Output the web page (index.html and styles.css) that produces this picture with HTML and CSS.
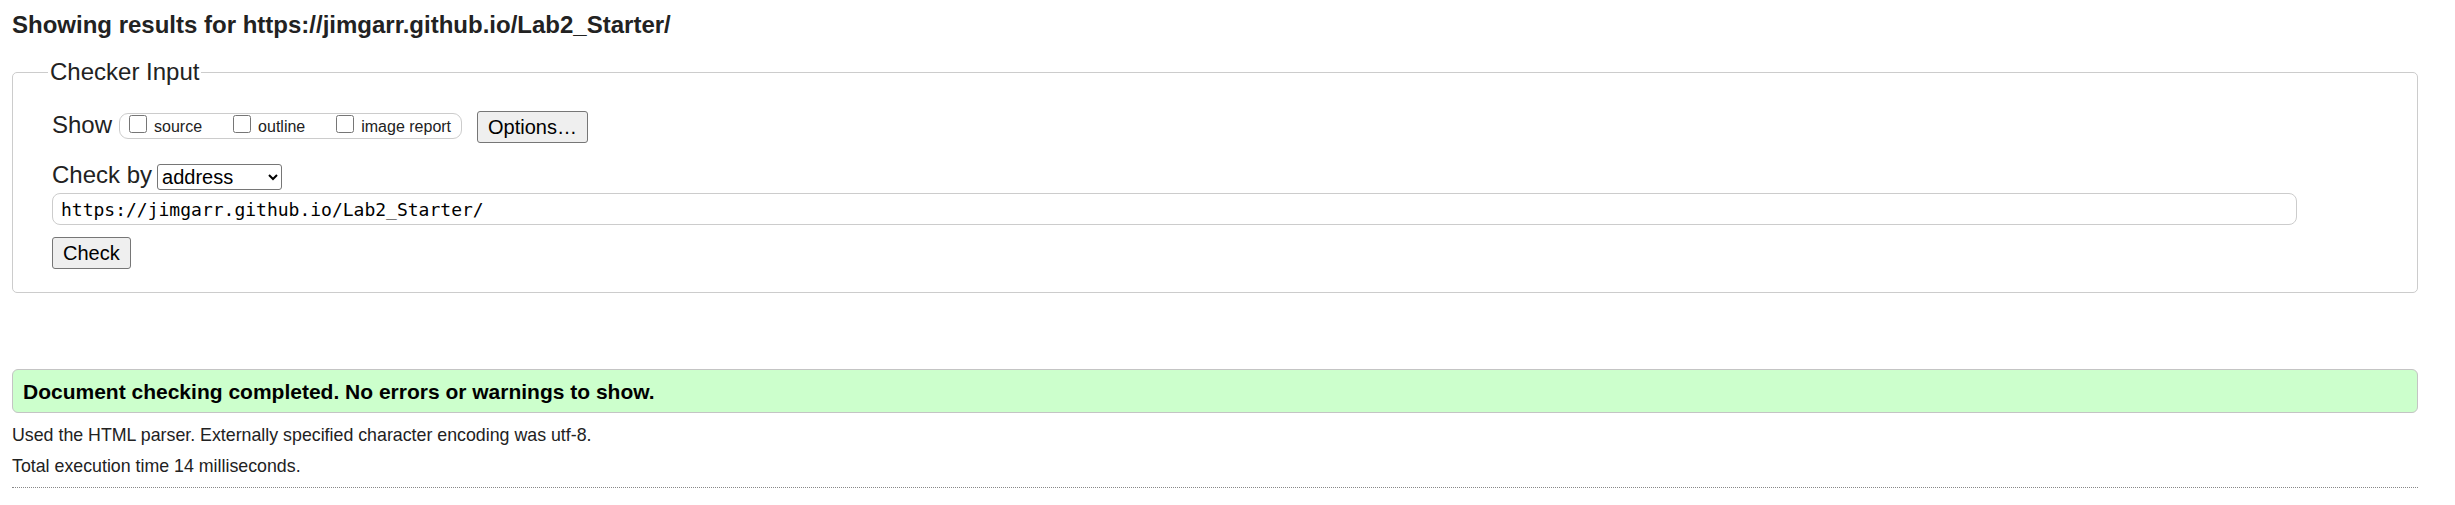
FILE: index.html
```html
<!DOCTYPE html>
<html lang="en">
<head>
<meta charset="utf-8">
<title>Showing results for https://jimgarr.github.io/Lab2_Starter/ - Nu Html Checker</title>
<link rel="stylesheet" href="styles.css">
</head>
<body>
<div class="page">
  <h2 class="heading">Showing results for https://jimgarr.github.io/Lab2_Starter/</h2>
  <form class="checker-form">
    <fieldset class="checker">
      <legend class="checker-legend">Checker Input</legend>
      <div class="row show-row">
        <span class="row-label">Show</span>
        <div class="pill">
          <label class="opt"><input type="checkbox" class="cb"><span class="opt-text">source</span></label>
          <label class="opt"><input type="checkbox" class="cb"><span class="opt-text">outline</span></label>
          <label class="opt"><input type="checkbox" class="cb"><span class="opt-text">image report</span></label>
        </div>
        <button type="button" class="btn">Options…</button>
      </div>
      <div class="row by-row">
        <span class="row-label">Check by</span>
        <select class="by-select"><option>address</option></select>
      </div>
      <div class="url-row">
        <input type="text" class="url-input" value="https://jimgarr.github.io/Lab2_Starter/">
      </div>
      <div class="submit-row">
        <button type="button" class="btn">Check</button>
      </div>
    </fieldset>
  </form>
  <div class="success"><p class="success-text">Document checking completed. No errors or warnings to show.</p></div>
  <p class="details first">Used the HTML parser. Externally specified character encoding was utf-8.</p>
  <p class="details">Total execution time 14 milliseconds.</p>
  <hr class="rule">
</div>
</body>
</html>
```
FILE: styles.css
```css
html, body {
  margin: 0;
  padding: 0;
  background: #fff;
}
body {
  font-family: "Liberation Sans", Arial, sans-serif;
  color: #222;
}
.page {
  margin: 0 37px 0 12px;
}
.heading {
  margin: 0;
  padding-top: 11px;
  font-size: 24px;
  line-height: 28px;
  font-weight: bold;
  color: #222;
}
.checker-form {
  margin: 19px 0 0 0;
}
.checker {
  margin: 0;
  padding: 0 39px 23px 39px;
  border: 1px solid #ccc;
  border-radius: 5px;
  min-width: 0;
}
.checker-legend {
  margin-left: -4px;
  padding: 0 2px;
  font-size: 24px;
  line-height: 28px;
  color: #222;
}
.row {
  display: flex;
  align-items: flex-start;
}
.row-label {
  font-size: 24px;
  line-height: 28px;
  color: #222;
}
.show-row {
  margin-top: 25px;
}
.pill {
  display: flex;
  align-items: flex-start;
  margin: 2px 0 0 7px;
  height: 24px;
  padding: 0 10px 0 9px;
  border: 1px solid #ccc;
  border-radius: 9px;
}
.opt {
  display: flex;
  align-items: flex-start;
  margin-right: 31px;
}
.opt:last-child {
  margin-right: 0;
}
.cb {
  width: 18px;
  height: 18px;
  margin: 1px 7px 0 0;
}
.opt-text {
  font-size: 16px;
  line-height: 20px;
  padding-top: 3px;
  color: #222;
}
.btn {
  box-sizing: border-box;
  height: 32px;
  padding: 0 10px;
  font-family: "Liberation Sans", Arial, sans-serif;
  font-size: 20px;
  color: #000;
  background: #efefef;
  border: 1px solid #767676;
  border-radius: 3px;
}
.show-row .btn {
  margin-left: 15px;
}
.by-row {
  margin-top: 18px;
}
.by-select {
  box-sizing: border-box;
  width: 125px;
  height: 26px;
  margin: 3px 0 0 5px;
  font-family: "Liberation Sans", Arial, sans-serif;
  font-size: 20px;
  color: #000;
  background: #fff;
  border: 1px solid #767676;
  border-radius: 3px;
}
.url-row {
  margin-top: 3px;
}
.url-input {
  box-sizing: border-box;
  display: block;
  width: 2245px;
  height: 32px;
  margin: 0;
  padding: 0 8px;
  font-family: "DejaVu Sans Mono", "Liberation Mono", monospace;
  font-size: 18px;
  color: #000;
  border: 1px solid #ccc;
  border-radius: 8px;
  outline: none;
}
.submit-row {
  margin-top: 12px;
}
.success {
  margin-top: 76px;
  box-sizing: border-box;
  height: 44px;
  padding: 9px 10px 0 10px;
  background: #ccffcc;
  border: 1px solid #c4c4c4;
  border-radius: 6px;
}
.success-text {
  margin: 0;
  font-size: 21px;
  line-height: 25px;
  font-weight: bold;
  color: #000;
}
.details {
  margin: 10px 0 0 0;
  font-size: 17.8px;
  line-height: 21px;
  color: #222;
}
.details.first {
  margin-top: 12px;
}
.rule {
  margin: 10px 0 0 0;
  border: 0;
  border-top: 1px dotted #888;
  height: 0;
}
```
